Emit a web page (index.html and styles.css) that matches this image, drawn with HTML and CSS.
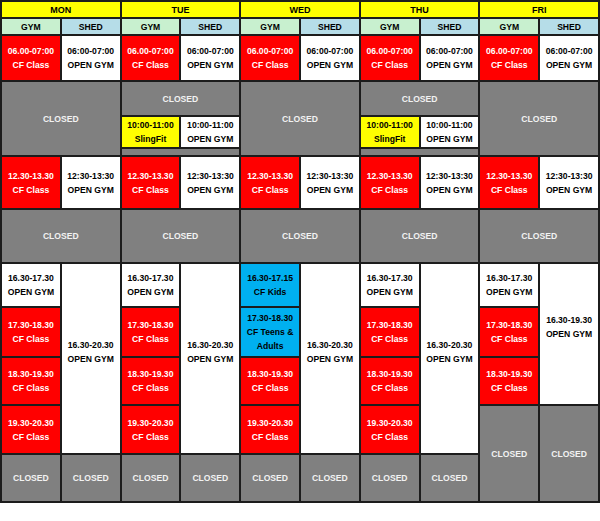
FILE: index.html
```html
<!DOCTYPE html>
<html>
<head>
<meta charset="utf-8">
<link rel="stylesheet" href="styles.css">
</head>
<body>
<table class="tt">
  <tr class="r-head">
    <th class="day" colspan="2">MON</th>
    <th class="day" colspan="2">TUE</th>
    <th class="day" colspan="2">WED</th>
    <th class="day" colspan="2">THU</th>
    <th class="day" colspan="2">FRI</th>
  </tr>
  <tr class="r-sub">
    <th class="gym">GYM</th><th class="shed">SHED</th>
    <th class="gym">GYM</th><th class="shed">SHED</th>
    <th class="gym">GYM</th><th class="shed">SHED</th>
    <th class="gym">GYM</th><th class="shed">SHED</th>
    <th class="gym">GYM</th><th class="shed">SHED</th>
  </tr>
  <tr class="r-06">
    <td class="cf">06.00-07:00<br>CF Class</td><td class="open">06:00-07:00<br>OPEN GYM</td>
    <td class="cf">06.00-07:00<br>CF Class</td><td class="open">06:00-07:00<br>OPEN GYM</td>
    <td class="cf">06.00-07:00<br>CF Class</td><td class="open">06:00-07:00<br>OPEN GYM</td>
    <td class="cf">06.00-07:00<br>CF Class</td><td class="open">06:00-07:00<br>OPEN GYM</td>
    <td class="cf">06.00-07:00<br>CF Class</td><td class="open">06:00-07:00<br>OPEN GYM</td>
  </tr>
  <tr class="r-closed-a">
    <td class="closed" colspan="2" rowspan="3">CLOSED</td>
    <td class="closed" colspan="2">CLOSED</td>
    <td class="closed" colspan="2" rowspan="3">CLOSED</td>
    <td class="closed" colspan="2">CLOSED</td>
    <td class="closed" colspan="2" rowspan="3">CLOSED</td>
  </tr>
  <tr class="r-10">
    <td class="sling">10:00-11:00<br>SlingFit</td><td class="open">10:00-11:00<br>OPEN GYM</td>
    <td class="sling">10:00-11:00<br>SlingFit</td><td class="open">10:00-11:00<br>OPEN GYM</td>
  </tr>
  <tr class="r-strip">
    <td class="closed" colspan="2"></td>
    <td class="closed" colspan="2"></td>
  </tr>
  <tr class="r-12">
    <td class="cf">12.30-13.30<br>CF Class</td><td class="open">12:30-13:30<br>OPEN GYM</td>
    <td class="cf">12.30-13.30<br>CF Class</td><td class="open">12:30-13:30<br>OPEN GYM</td>
    <td class="cf">12.30-13.30<br>CF Class</td><td class="open">12:30-13:30<br>OPEN GYM</td>
    <td class="cf">12.30-13.30<br>CF Class</td><td class="open">12:30-13:30<br>OPEN GYM</td>
    <td class="cf">12.30-13.30<br>CF Class</td><td class="open">12:30-13:30<br>OPEN GYM</td>
  </tr>
  <tr class="r-closed-b">
    <td class="closed" colspan="2">CLOSED</td>
    <td class="closed" colspan="2">CLOSED</td>
    <td class="closed" colspan="2">CLOSED</td>
    <td class="closed" colspan="2">CLOSED</td>
    <td class="closed" colspan="2">CLOSED</td>
  </tr>
  <tr class="r-1630">
    <td class="open">16.30-17.30<br>OPEN GYM</td><td class="open tall" rowspan="4">16.30-20.30<br>OPEN GYM</td>
    <td class="open">16.30-17.30<br>OPEN GYM</td><td class="open tall" rowspan="4">16.30-20.30<br>OPEN GYM</td>
    <td class="kids">16.30-17.15<br>CF Kids</td><td class="open tall" rowspan="4">16.30-20.30<br>OPEN GYM</td>
    <td class="open">16.30-17.30<br>OPEN GYM</td><td class="open tall" rowspan="4">16.30-20.30<br>OPEN GYM</td>
    <td class="open">16.30-17.30<br>OPEN GYM</td><td class="open tall" rowspan="3">16.30-19.30<br>OPEN GYM</td>
  </tr>
  <tr class="r-1730">
    <td class="cf">17.30-18.30<br>CF Class</td>
    <td class="cf">17.30-18.30<br>CF Class</td>
    <td class="kids">17.30-18.30<br>CF Teens &amp;<br>Adults</td>
    <td class="cf">17.30-18.30<br>CF Class</td>
    <td class="cf">17.30-18.30<br>CF Class</td>
  </tr>
  <tr class="r-1830">
    <td class="cf">18.30-19.30<br>CF Class</td>
    <td class="cf">18.30-19.30<br>CF Class</td>
    <td class="cf">18.30-19.30<br>CF Class</td>
    <td class="cf">18.30-19.30<br>CF Class</td>
    <td class="cf">18.30-19.30<br>CF Class</td>
  </tr>
  <tr class="r-1930">
    <td class="cf">19.30-20.30<br>CF Class</td>
    <td class="cf">19.30-20.30<br>CF Class</td>
    <td class="cf">19.30-20.30<br>CF Class</td>
    <td class="cf">19.30-20.30<br>CF Class</td>
    <td class="closed" rowspan="2">CLOSED</td><td class="closed" rowspan="2">CLOSED</td>
  </tr>
  <tr class="r-closed-c">
    <td class="closed">CLOSED</td><td class="closed">CLOSED</td>
    <td class="closed">CLOSED</td><td class="closed">CLOSED</td>
    <td class="closed">CLOSED</td><td class="closed">CLOSED</td>
    <td class="closed">CLOSED</td><td class="closed">CLOSED</td>
  </tr>
</table>
</body>
</html>
```

FILE: styles.css
```css
html, body {
  margin: 0;
  padding: 0;
  background: #ffffff;
}

.tt {
  width: 600px;
  table-layout: fixed;
  border-collapse: separate;
  border-spacing: 2px;
  background: #1c1c1c;
  font-family: "Liberation Sans", Arial, sans-serif;
  font-weight: bold;
  font-size: 8.6px;
  line-height: 14px;
  color: #000;
}

.tt th,
.tt td {
  padding: 0;
  text-align: center;
  vertical-align: middle;
  overflow: hidden;
}

.r-head { height: 15px; }
.r-sub { height: 15px; }
.r-06 { height: 44px; }
.r-closed-a { height: 33px; }
.r-10 { height: 30px; }
.r-strip { height: 6px; }
.r-12 { height: 51px; }
.r-closed-b { height: 52px; }
.r-1630 { height: 42px; }
.r-1730 { height: 48px; }
.r-1830 { height: 46px; }
.r-1930 { height: 47px; }
.r-closed-c { height: 46px; }

.day {
  background: #ffff00;
  font-size: 9px;
}

.gym { background: #c8f0cf; }
.shed { background: #b6dde8; }

.cf {
  background: #ff0000;
  color: #ffffff;
}

.open { background: #ffffff; }

.sling { background: #ffff00; }

.kids { background: #00b0f0; }

.closed {
  background: #808080;
  color: #f2f2f2;
}

.tt .tall { padding-bottom: 14px; }
```
